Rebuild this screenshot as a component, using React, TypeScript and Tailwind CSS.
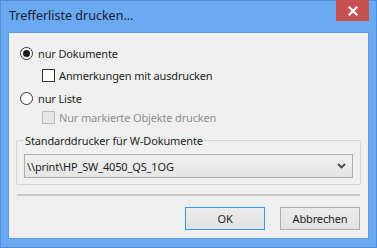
import React from "react";

const font = { fontFamily: '"Noto Sans", "Open Sans", Arial, sans-serif' };

function Radio({ checked }: { checked?: boolean }) {
  return (
    <div className="w-[13px] h-[13px] rounded-full border border-[#333333] bg-white flex items-center justify-center shrink-0">
      {checked && <div className="w-[7px] h-[7px] rounded-full bg-[#1a1a1a]" />}
    </div>
  );
}

function Check({ disabled }: { disabled?: boolean }) {
  return (
    <div
      className={
        disabled
          ? "w-[13px] h-[13px] border border-[#bcbcbc] bg-[#e6e6e6] shrink-0"
          : "w-[13px] h-[13px] border border-[#333333] bg-white shrink-0"
      }
    />
  );
}

export default function App() {
  return (
    <div
      className="w-[377px] h-[248px] bg-[#6aaaf3] border border-[#4d8ddd] flex flex-col text-[11px] tracking-[-0.15px] text-[#1e1e1e] leading-[15px]"
      style={font}
    >
      <div className="h-[31px] flex items-start shrink-0">
        <div className="pl-[8px] pt-[7px] text-[12.5px] tracking-normal text-[#1b1b2e] flex-1">Trefferliste drucken...</div>
        <div className="w-[33px] h-[21px] mr-[7px] mt-[-1px] bg-[#c75050] flex items-center justify-center">
          <svg width="10" height="10" viewBox="0 0 10 10">
            <path d="M1.5 1.5 L8.5 8.5 M8.5 1.5 L1.5 8.5" stroke="white" strokeWidth="2.2" strokeLinecap="square" />
          </svg>
        </div>
      </div>
      <div className="mx-[7px] h-[207px] bg-[#f0f0f0] border border-[#5c9ae2] flex flex-col">
        <div className="flex flex-col pl-[11px] pt-[13px]">
          <div className="flex items-center gap-[5px] h-[14px]">
            <Radio checked />
            <span>nur Dokumente</span>
          </div>
          <div className="flex items-center gap-[4px] h-[14px] mt-[8px] pl-[22px]">
            <Check />
            <span>Anmerkungen mit ausdrucken</span>
          </div>
          <div className="flex items-center gap-[5px] h-[14px] mt-[9px]">
            <Radio />
            <span>nur Liste</span>
          </div>
          <div className="flex items-center gap-[4px] h-[14px] mt-[5px] pl-[22px]">
            <Check disabled />
            <span className="text-[#8d8d8d]">Nur markierte Objekte drucken</span>
          </div>
        </div>
        <fieldset className="mx-[7px] mt-[9px] border border-[#d5d5d5] rounded-[2px] h-[52px] px-[7px]">
          <legend className="px-[1px] ml-[0px]">Standarddrucker für W-Dokumente</legend>
          <div className="h-[24px] mt-[6px] border border-[#acacac] bg-gradient-to-b from-[#f0f0f0] to-[#e5e5e5] flex items-center pl-[2px] pr-[6px]">
            <span className="flex-1">\\print\HP_SW_4050_QS_1OG</span>
            <svg width="9" height="6" viewBox="0 0 9 6">
              <path d="M1 1 L4.5 4.5 L8 1" stroke="#444" strokeWidth="1.8" fill="none" />
            </svg>
          </div>
        </fieldset>
        <div className="mx-[8px] mt-[9px] h-[2px] bg-[#c8c8c8]" />
        <div className="flex justify-end gap-[15px] mr-[8px] mt-[11px]">
          <div className="w-[80px] h-[23px] border border-[#3399ff] bg-gradient-to-b from-[#ececec] to-[#e2e2e2] flex items-center justify-center">
            OK
          </div>
          <div className="w-[80px] h-[23px] border border-[#acacac] bg-gradient-to-b from-[#ececec] to-[#e2e2e2] flex items-center justify-center">
            Abbrechen
          </div>
        </div>
      </div>
    </div>
  );
}
